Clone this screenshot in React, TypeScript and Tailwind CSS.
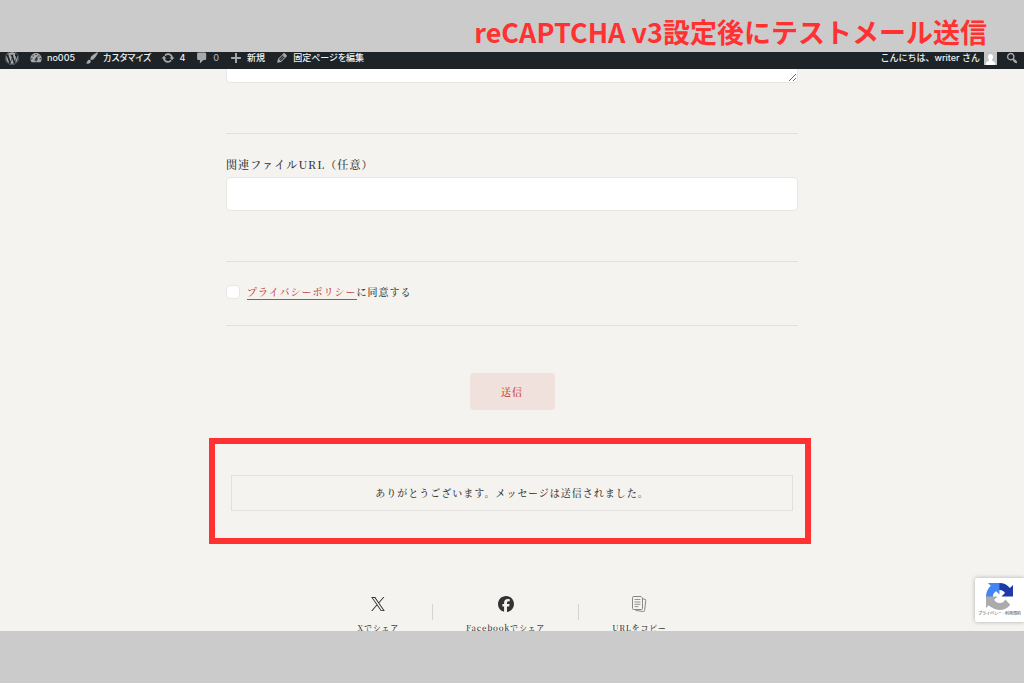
import type { ReactNode } from 'react';
import { FaFacebook, FaWordpress } from 'react-icons/fa6';

// Dashicons, 20x20 grid
const icons = {
  dashboard:
    'M3.76 16h12.48c1.1-1.37 1.76-3.11 1.76-5 0-4.42-3.58-8-8-8s-8 3.58-8 8c0 1.89.66 3.63 1.76 5zM10 4c.55 0 1 .45 1 1s-.45 1-1 1-1-.45-1-1 .45-1 1-1zM6 6c.55 0 1 .45 1 1s-.45 1-1 1-1-.45-1-1 .45-1 1-1zm8 0c.55 0 1 .45 1 1s-.45 1-1 1-1-.45-1-1 .45-1 1-1zm-5.37 5.55L12 7v6c0 1.1-.9 2-2 2s-2-.9-2-2c0-.57.24-1.08.63-1.45zM4 10c.55 0 1 .45 1 1s-.45 1-1 1-1-.45-1-1 .45-1 1-1zm12 0c.55 0 1 .45 1 1s-.45 1-1 1-1-.45-1-1 .45-1 1-1zm-5 3c0-.55-.45-1-1-1s-1 .45-1 1 .45 1 1 1 1-.45 1-1z',
  brush:
    'M18.33 3.57s.27-.8-.31-1.36c-.53-.52-1.22-.24-1.22-.24-.61.3-5.76 3.47-7.67 5.57-.86.96-2.06 3.79-1.09 4.82.92.98 3.96-.17 4.79-1 2.06-2.06 5.21-7.17 5.5-7.79zM1.4 17.65c2.37-1.56 1.46-3.41 3.23-4.64.93-.65 2.22-.62 3.08.29.63.67.8 2.57-.16 3.46-1.57 1.45-4 1.55-6.15.89z',
  update:
    'M10.2 3.28c3.53 0 6.43 2.61 6.92 6h2.08l-3.5 4-3.5-4h2.32c-.45-1.97-2.21-3.45-4.32-3.45-1.45 0-2.73.71-3.54 1.78L4.95 5.66C6.23 4.2 8.11 3.28 10.2 3.28zm-.4 13.44c-3.52 0-6.43-2.61-6.92-6H.8l3.5-4c1.17 1.33 2.33 2.67 3.5 4H5.48c.45 1.97 2.21 3.45 4.32 3.45 1.45 0 2.73-.71 3.54-1.78l1.71 1.95c-1.28 1.46-3.15 2.38-5.25 2.38z',
  comment:
    'M5 2h9c1.1 0 2 .9 2 2v7c0 1.1-.9 2-2 2h-2l-5 5v-5H5c-1.1 0-2-.9-2-2V4c0-1.1.9-2 2-2z',
  plus: 'M17 8.500v2.800h-5.600V17H8.600v-5.700H3V8.500h5.600V3h2.800v5.500z',
  edit:
    'M13.89 3.39l2.71 2.72c.46.46.42 1.24.03 1.64l-8.01 8.02-5.56 1.16 1.16-5.58s7.6-7.63 7.99-8.03c.39-.39 1.22-.39 1.68.07zm-2.73 2.79l-5.59 5.61 1.11 1.11 5.54-5.65zm-2.97 8.23l5.58-5.6-1.07-1.08-5.59 5.6z',
  search:
    'M12.14 4.18c1.87 1.87 2.11 4.75.72 6.89.12.1.22.21.36.31.2.16.47.36.81.59.34.24.56.39.66.47.42.31.73.57.94.78.32.32.6.65.84 1 .25.35.44.69.59 1.04.14.35.21.68.18 1-.02.32-.14.59-.36.81s-.49.34-.81.36c-.31.02-.65-.04-.99-.19-.35-.14-.7-.34-1.04-.59-.35-.24-.68-.52-1-.84-.21-.21-.47-.52-.77-.93-.1-.13-.25-.35-.47-.66-.22-.32-.4-.57-.56-.78-.16-.2-.29-.35-.44-.5-2.07 1.09-4.69.76-6.44-.98-2.14-2.15-2.14-5.64 0-7.78 2.15-2.15 5.63-2.15 7.78 0zm-1.41 6.36c1.36-1.37 1.36-3.58 0-4.95-1.37-1.37-3.59-1.37-4.95 0-1.37 1.37-1.37 3.58 0 4.95 1.36 1.37 3.58 1.37 4.95 0z',
};

type IconName = keyof typeof icons;

function Dashicon({ name }: { name: IconName }) {
  return (
    <svg viewBox="0 0 20 20" className="w-3.5 h-3.5 shrink-0 text-[#a7aaad]" fill="currentColor" aria-hidden="true">
      <path d={icons[name]} />
    </svg>
  );
}

const adminItems: { icon: IconName; label: string; muted?: boolean }[] = [
  { icon: 'dashboard', label: 'no005' },
  { icon: 'brush', label: 'カスタマイズ' },
  { icon: 'update', label: '4' },
  { icon: 'comment', label: '0', muted: true },
  { icon: 'plus', label: '新規' },
  { icon: 'edit', label: '固定ページを編集' },
];

function AdminBar() {
  return (
    <nav className="h-[17px] shrink-0 overflow-hidden flex items-end bg-[#1d2327] font-['Inter','Noto_Sans_CJK_JP',sans-serif] text-[9px] font-medium text-[#f0f0f1] whitespace-nowrap">
      <div className="w-full h-[22px] shrink-0 flex items-center justify-between px-[5px]">
        <div className="flex items-center gap-2.5 [font-feature-settings:'palt']">
          <a href="#wp" aria-label="WordPress">
            <FaWordpress className="w-3.5 h-3.5 text-[#a7aaad]" />
          </a>
          {adminItems.map((item) => (
            <a key={item.icon} href={`#${item.icon}`} className="flex items-center gap-1">
              <Dashicon name={item.icon} />
              <span className={item.muted ? 'text-[#a7aaad]' : ''}>{item.label}</span>
            </a>
          ))}
        </div>
        <div className="flex items-center gap-2">
          <a href="#profile" className="flex items-center gap-1">
            <span>こんにちは、writer さん</span>
            <svg viewBox="0 0 13 13" className="w-[13px] h-[13px]" aria-hidden="true">
              <path fill="#c3c4c7" d="M0 0h13v13H0z" />
              <path fill="#fff" d="M6.500 2C8.200 2 9 3.200 9 4.800S8 8 7.800 8.300C8.500 9.300 11 9.500 11 11.500V13H2v-1.500c0-2 2.500-2.200 3.200-3.200C5 8 4 6.400 4 4.800S4.800 2 6.500 2z" />
            </svg>
          </a>
          <button type="button" aria-label="検索">
            <Dashicon name="search" />
          </button>
        </div>
      </div>
    </nav>
  );
}

function XIcon() {
  return (
    <svg viewBox="0 0 24 24" className="w-3.5 h-3.5" fill="currentColor" aria-hidden="true">
      <path d="M14.234 10.162 22.977 0h-2.072l-7.591 8.824L7.251 0H.258l9.168 13.343L.258 24H2.33l8.016-9.318L16.749 24h6.993zm-2.837 3.299-.929-1.329L3.076 1.56h3.182l5.965 8.532.929 1.329 7.754 11.09h-3.182z" />
    </svg>
  );
}

function CopyIcon() {
  return (
    <svg viewBox="0 0 16 18" className="w-4 h-[18px]" fill="none" stroke="#888" strokeLinejoin="round" strokeLinecap="round" aria-hidden="true">
      <path d="M2.500 1.500h7.500l1.500 1.500v10.500a1 1 0 0 1-1 1h-8a1 1 0 0 1-1-1v-11a1 1 0 0 1 1-1z" />
      <path d="M12 4l2 .3a1 1 0 0 1 .8 1.100l-1.200 10.200a1 1 0 0 1-1.100.9L5 15.500" />
      <path strokeWidth=".9" d="M4 4.500h5M4 7h5M4 9.300h5M4 11.600h3" />
    </svg>
  );
}

function ShareLink({ label, children }: { label: string; children: ReactNode }) {
  return (
    <a href="#share" className="flex flex-col items-center gap-[9px]">
      <span className="h-[18px] flex items-center">{children}</span>
      <span className="text-[8px] leading-3 font-medium tracking-widest whitespace-nowrap">{label}</span>
    </a>
  );
}

function RecaptchaBadge() {
  return (
    <aside className="absolute right-0 bottom-[9px] w-[49px] h-11 pt-[5px] flex flex-col items-center rounded-l-xs bg-white shadow-[0_0_4px_#aaa]">
      <svg viewBox="0 0 64 64" className="w-[27px] h-[27px]" aria-hidden="true">
        <path fill="#1c3aa9" d="M64 31.955l-.033-1.37V4.687l-7.16 7.16C50.948 4.674 42.033.093 32.05.093c-10.4 0-19.622 4.96-25.458 12.64l11.736 11.86a15.55 15.55 0 0 1 4.754-5.334c2.05-1.6 4.952-2.906 8.968-2.906.485 0 .86.057 1.135.163 4.976.393 9.288 3.14 11.828 7.124l-8.307 8.307L64 31.953" />
        <path fill="#4285f4" d="M31.862.094l-1.37.033H4.594l7.16 7.16C4.58 13.147 0 22.06 0 32.046c0 10.4 4.96 19.622 12.64 25.458L24.5 45.768a15.55 15.55 0 0 1-5.334-4.754c-1.6-2.05-2.906-4.952-2.906-8.968 0-.485.057-.86.163-1.135.393-4.976 3.14-9.288 7.124-11.828l8.307 8.307L31.86.095" />
        <path fill="#ababab" d="M.001 32.045l.033 1.37v25.898l7.16-7.16c5.86 7.173 14.774 11.754 24.76 11.754 10.4 0 19.622-4.96 25.458-12.64l-11.736-11.86a15.55 15.55 0 0 1-4.754 5.334c-2.05 1.6-4.952 2.906-8.968 2.906-.485 0-.86-.057-1.135-.163-4.976-.393-9.288-3.14-11.828-7.124l8.307-8.307c-10.522.04-22.4.066-27.295-.005" />
      </svg>
      <p className="font-['Roboto','Noto_Sans_CJK_JP',sans-serif] text-[4px] leading-2 whitespace-nowrap text-[#333]">
        <a href="#privacy">プライバシー</a> - <a href="#terms">利用規約</a>
      </p>
    </aside>
  );
}

export default function App() {
  return (
    <div className="h-screen flex flex-col bg-[#cbcbcb]">
      <header className="h-[52px] shrink-0 flex justify-end pr-[37px] pt-3">
        <h1 className="font-['Noto_Sans_CJK_JP',sans-serif] text-[27px] leading-10 font-bold text-[#ff3131] whitespace-nowrap">
          reCAPTCHA v3設定後にテストメール送信
        </h1>
      </header>

      <div className="relative flex-1 min-h-0 overflow-hidden flex flex-col bg-[#f5f3ef]">
        <AdminBar />

        <main className="w-full max-w-[572px] mx-auto font-['Noto_Serif_CJK_JP','Liberation_Serif','Noto_Sans_CJK_JP',serif] text-[#333]">
          <form onSubmit={(e) => e.preventDefault()}>
            <textarea
              aria-label="メッセージ"
              className="block w-full h-[14px] min-h-0 resize-y rounded-b-sm border border-t-0 border-[#e8e6e2] bg-white"
            />

            <hr className="mt-[50px] border-[#e2e0dc]" />

            <label htmlFor="file-url" className="block mt-5 text-[11px] leading-5 font-medium tracking-widest">
              関連ファイルURL（任意）
            </label>
            <input
              id="file-url"
              type="url"
              className="block w-full h-[34px] mt-[3px] px-3 rounded-sm border border-[#e8e6e2] bg-white text-[11px]"
            />

            <hr className="mt-[50px] border-[#e2e0dc]" />

            <div className="h-[63px] pb-1 flex items-center gap-[7px] text-[10px] leading-4 font-medium tracking-widest">
              <input
                id="agree"
                type="checkbox"
                className="appearance-none w-[14px] h-[14px] rounded-sm border border-[#e8e6e2] bg-white checked:bg-[#c8453c]"
              />
              <label htmlFor="agree">
                <a href="#privacy" className="inline-block leading-[14px] border-b border-[#c8453c] text-[#c8453c]">プライバシーポリシー</a>
                に同意する
              </label>
            </div>

            <hr className="border-[#e2e0dc]" />

            <button
              type="submit"
              className="block w-[85px] h-[37px] mt-[47px] mx-auto rounded-sm bg-[#f0e1dc] text-[10px] font-semibold tracking-widest text-[#cc4a42]"
            >
              送信
            </button>
          </form>

          {/* Submit result */}
          <section className="mt-7 -ml-[17px] -mr-[13px] h-[106px] pt-1 pl-4 pr-3 flex items-center border-6 border-[#ff3131]">
            <p role="status" className="w-full py-2 border border-[#e2e0dc] text-center text-[10px] leading-[18px] font-medium tracking-widest">
              ありがとうございます。メッセージは送信されました。
            </p>
          </section>

          <div className="mt-[51px] flex justify-center gap-[33px]">
            <ShareLink label="Xでシェア">
              <XIcon />
            </ShareLink>
            <span className="w-px h-4 mt-[9px] bg-[#d5d3cf]" />
            <ShareLink label="Facebookでシェア">
              <FaFacebook className="w-4 h-4" />
            </ShareLink>
            <span className="w-px h-4 mt-[9px] bg-[#d5d3cf]" />
            <ShareLink label="URLをコピー">
              <CopyIcon />
            </ShareLink>
          </div>
        </main>

        <RecaptchaBadge />
      </div>

      <footer className="h-[52px] shrink-0" />
    </div>
  );
}
